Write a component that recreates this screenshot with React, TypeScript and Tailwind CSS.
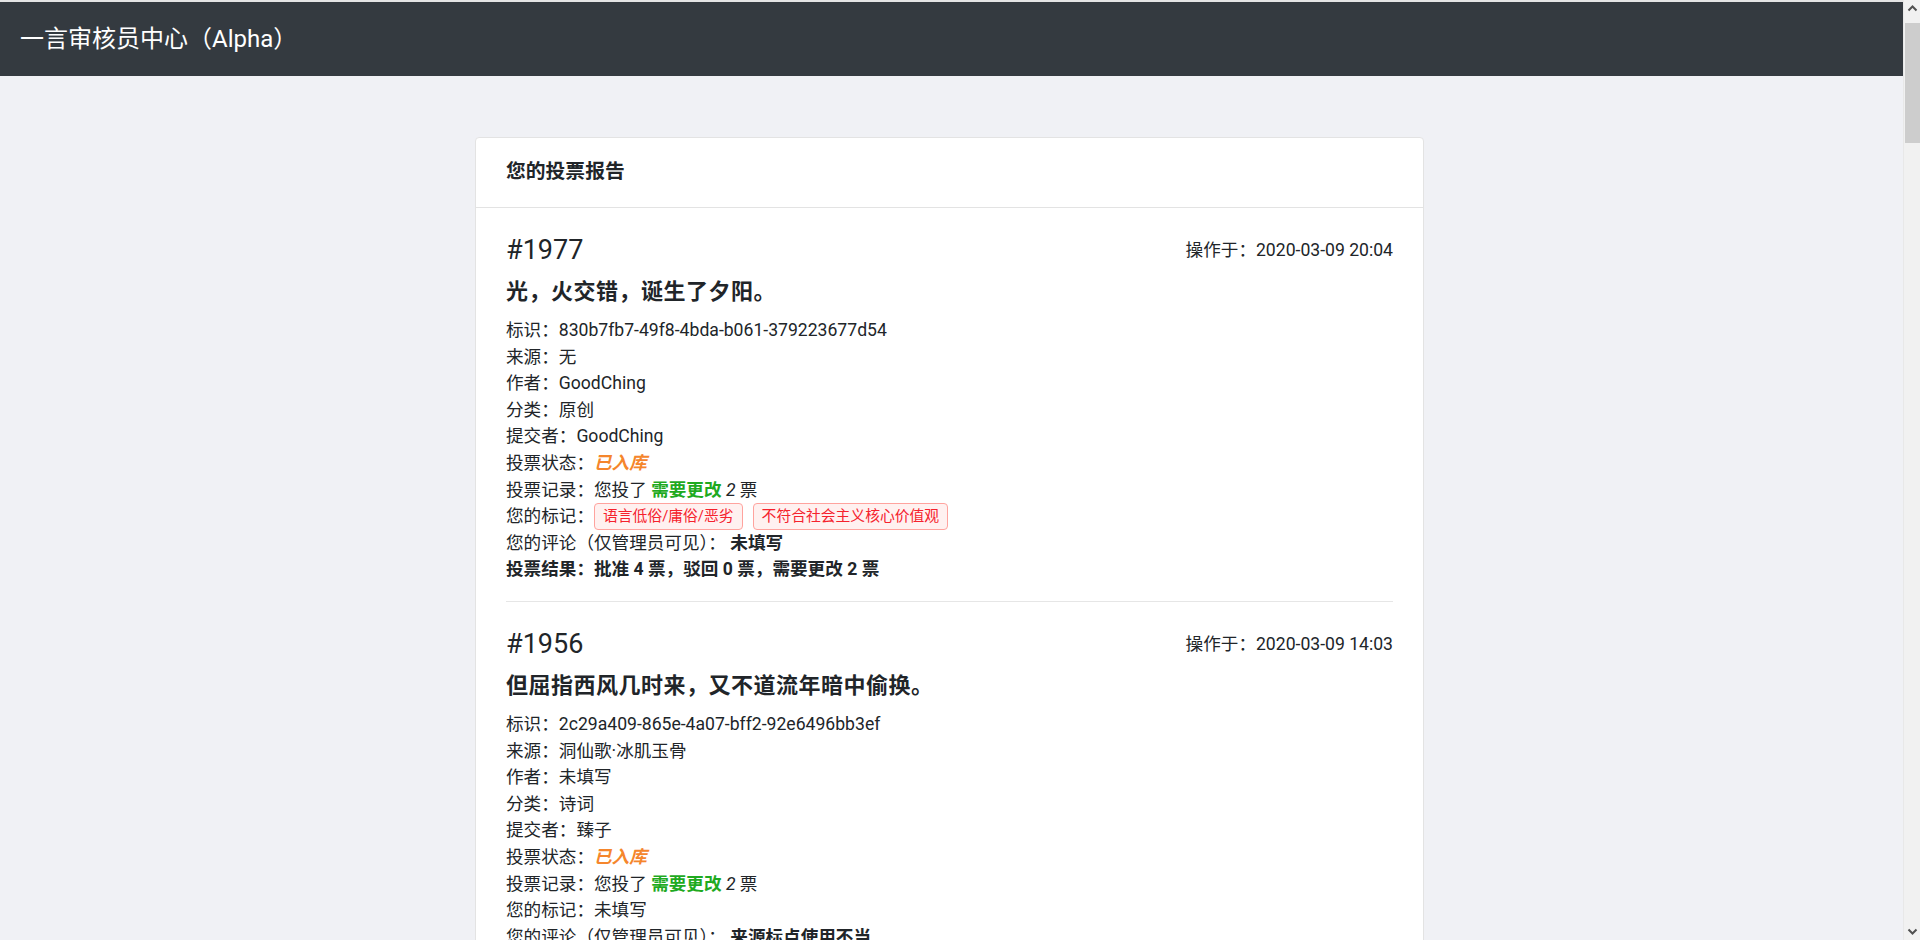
import React from 'react';

type Vote = {
  id: number;
  time: string;
  text: string;
  uuid: string;
  from: string;
  author: string;
  category: string;
  creator: string;
  status: string;
  myVote: string;
  myVoteCount: number;
  marks: string[];
  comment: string;
  result: [number, number, number];
};

const votes: Vote[] = [
{
  id: 1977,
  time: '2020-03-09 20:04',
  text: '光，火交错，诞生了夕阳。',
  uuid: '830b7fb7-49f8-4bda-b061-379223677d54',
  from: '无',
  author: 'GoodChing',
  category: '原创',
  creator: 'GoodChing',
  status: '已入库',
  myVote: '需要更改',
  myVoteCount: 2,
  marks: ['语言低俗/庸俗/恶劣', '不符合社会主义核心价值观'],
  comment: '未填写',
  result: [4, 0, 2]
},
{
  id: 1956,
  time: '2020-03-09 14:03',
  text: '但屈指西风几时来，又不道流年暗中偷换。',
  uuid: '2c29a409-865e-4a07-bff2-92e6496bb3ef',
  from: '洞仙歌·冰肌玉骨',
  author: '未填写',
  category: '诗词',
  creator: '臻子',
  status: '已入库',
  myVote: '需要更改',
  myVoteCount: 2,
  marks: [],
  comment: '来源标点使用不当',
  result: [5, 0, 1]
},
{
  id: 1948,
  time: '2020-03-09 11:27',
  text: '世界上没有什么不能被改变，也没有什么永远不变。',
  uuid: '5d1e0c3a-7b2f-4e61-9a8d-0f3c6b2e91a4',
  from: '无',
  author: '未填写',
  category: '原创',
  creator: 'Aster',
  status: '已入库',
  myVote: '批准',
  myVoteCount: 1,
  marks: [],
  comment: '未填写',
  result: [6, 0, 0]
}];


const VoteItem = ({ v, last }: {v: Vote;last: boolean;}) =>
<div className={last ? 'pt-[26px] pb-[18px]' : 'pt-[26px] pb-[18px] border-b border-[#e6e6e6]'}>
    <div className="flex items-center justify-between mb-[13px]">
      <h3 className="text-[27px] leading-[32px] font-normal">#{v.id}</h3>
      <span>操作于：{v.time}</span>
    </div>
    <p className="text-[22px] leading-[26px] font-bold mb-[12px] tracking-[0.5px]">{v.text}</p>
    <div>标识：{v.uuid}</div>
    <div>来源：{v.from}</div>
    <div>作者：{v.author}</div>
    <div>分类：{v.category}</div>
    <div>提交者：{v.creator}</div>
    <div>
      投票状态：<span className="font-bold italic text-[#f5862c]">{v.status}</span>
    </div>
    <div>
      投票记录：您投了 <span className="font-bold text-[#1faa1f]">{v.myVote}</span> <i>{v.myVoteCount}</i> 票
    </div>
    {v.marks.length > 0 ?
  <div className="flex items-center h-[26.6px]">
        <span>您的标记：</span>
        <div className="flex gap-[10px]">
          {v.marks.map((m) =>
      <span
        key={m}
        className="h-[27px] inline-flex items-center px-[8px] text-[14.8px] leading-none text-[#f5222d] bg-[#fff1f0] border border-[#ffa39e] rounded-[4px]">
              {m}
            </span>
      )}
        </div>
      </div> :

  <div>您的标记：未填写</div>
  }
    <div>
      您的评论（仅管理员可见）： <b>{v.comment}</b>
    </div>
    <div className="font-bold">
      投票结果：批准 {v.result[0]} 票，驳回 {v.result[1]} 票，需要更改 {v.result[2]} 票
    </div>
  </div>;


const Scrollbar = () =>
<div className="fixed top-0 right-0 h-screen w-[17px] bg-[#f1f1f1] border-l border-[#e8e8e8] flex flex-col items-center">
    <svg width="17" height="17" viewBox="0 0 17 17" className="shrink-0">
      <path d="M4.5 10.5 L8.5 6.5 L12.5 10.5" fill="none" stroke="#505050" strokeWidth="2" />
    </svg>
    <div className="w-[15px] h-[120px] mt-[6px] bg-[#cdcdcd]" />
    <div className="flex-1" />
    <svg width="17" height="17" viewBox="0 0 17 17" className="shrink-0">
      <path d="M4.5 6.5 L8.5 10.5 L12.5 6.5" fill="none" stroke="#505050" strokeWidth="2" />
    </svg>
  </div>;


export default function App() {
  return (
    <div className="min-h-screen pr-[17px] bg-[#f0f1f5] text-[#212529] text-[17.6px] leading-[26.6px] font-['Segoe_UI','Roboto','Noto_Sans_CJK_SC',sans-serif]">
      <header className="h-[76px] border-t-2 border-[#e4e4e4] bg-[#343a40] flex items-center px-[20px]">
        <span className="text-white text-[24px] leading-none">一言审核员中心（Alpha）</span>
      </header>

      <main className="pt-[61px] pb-[60px]">
        <div className="w-[949px] mx-auto -translate-x-[2px] bg-white border border-[#e3e3e3] rounded-[4px]">
          <div className="h-[70px] flex items-center px-[30px] border-b border-[#e3e3e3] font-bold text-[19.8px]">
            您的投票报告
          </div>
          <div className="px-[30px]">
            {votes.map((v, i) =>
            <VoteItem key={v.id} v={v} last={i === votes.length - 1} />
            )}
          </div>
        </div>
      </main>

      <Scrollbar />
    </div>);

}
